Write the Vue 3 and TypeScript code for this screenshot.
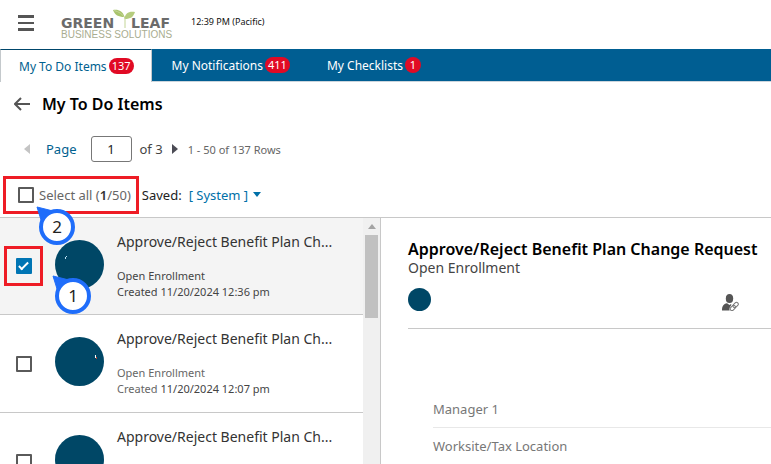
<script setup lang="ts">
import { ref } from 'vue'

interface Tab {
  label: string
  count: number
}

interface TodoItem {
  id: number
  title: string
  category: string
  created: string
  checked: boolean
}

const tabs: Tab[] = [
  { label: 'My To Do Items', count: 137 },
  { label: 'My Notifications', count: 411 },
  { label: 'My Checklists', count: 1 },
]
const activeTab = ref(0)
const page = ref('1')
const selectAll = ref(false)

const items = ref<TodoItem[]>([
  { id: 1, title: 'Approve/Reject Benefit Plan Ch...', category: 'Open Enrollment', created: '11/20/2024 12:36 pm', checked: true },
  { id: 2, title: 'Approve/Reject Benefit Plan Ch...', category: 'Open Enrollment', created: '11/20/2024 12:07 pm', checked: false },
  { id: 3, title: 'Approve/Reject Benefit Plan Ch...', category: '', created: '', checked: false },
])

const fields: string[] = ['Manager 1', 'Worksite/Tax Location']
</script>

<template>
  <div class="app">
    <header class="top">
      <button class="menu" type="button" aria-label="Menu">
        <svg width="16" height="16" viewBox="0 0 16 16">
          <path d="M0 0h16v3H0zM0 7h16v2H0zM0 13h16v3H0z" fill="#555" />
        </svg>
      </button>
      <div class="logo">
        <div class="logo-name">
          <span>GREEN</span>
          <svg class="leaf" width="22" height="20" viewBox="0 0 22 20">
            <path d="M0 1C5 0 10 2 11.500 8C5 8 2 6 0 1z" fill="#a9c46c" />
            <path d="M22 3C16 2 12 4 11.500 10C18 10 20 8 22 3z" fill="#b5cc7e" />
            <path d="M1 1.500Q8 3 12 9V19" fill="none" stroke="#c3d596" stroke-width="1" />
          </svg>
          <span>LEAF</span>
        </div>
        <div class="logo-sub">BUSINESS SOLUTIONS</div>
      </div>
      <span class="clock">12:39 PM (Pacific)</span>
    </header>

    <nav class="tabs">
      <button
        v-for="(tab, i) in tabs"
        :key="tab.label"
        type="button"
        class="tab"
        :class="{ active: i === activeTab }"
        @click="activeTab = i"
      >
        <span>{{ tab.label }}</span>
        <span class="badge">{{ tab.count }}</span>
      </button>
    </nav>

    <div class="heading">
      <button class="back" type="button" aria-label="Back">
        <svg width="16" height="14" viewBox="0 0 16 14">
          <path d="M7 1L1 7l6 6M1 7h15" fill="none" stroke="#555" stroke-width="2" />
        </svg>
      </button>
      <h1>My To Do Items</h1>
    </div>

    <div class="pager">
      <button class="arrow" type="button" aria-label="Previous page">
        <svg width="6" height="10" viewBox="0 0 6 10"><path d="M6 0v10L0 5z" fill="#c4c4c4" /></svg>
      </button>
      <label for="page">Page</label>
      <input id="page" v-model="page" class="page-box" type="text" />
      <span class="of">of 3</span>
      <button class="arrow next" type="button" aria-label="Next page">
        <svg width="6" height="10" viewBox="0 0 6 10"><path d="M0 0v10l6-5z" fill="#4c4c55" /></svg>
      </button>
      <span class="rows">1 - 50 of 137 Rows</span>
    </div>

    <div class="filters">
      <div class="select-all">
        <input id="select-all" v-model="selectAll" class="check" type="checkbox" />
        <label for="select-all">Select all (<b>1</b>/50)</label>
        <svg class="callout callout-all" width="40" height="40" viewBox="0 0 40 40">
          <path d="M0 1L16 5L5 17z" fill="#1f6dfa" stroke="#1f6dfa" stroke-linejoin="round" />
          <circle cx="20" cy="21" r="16" fill="#fff" stroke="#1f6dfa" stroke-width="4" />
          <text x="20" y="27" text-anchor="middle">2</text>
        </svg>
      </div>
      <span class="saved">Saved:</span>
      <button class="system" type="button">
        [ System ]
        <svg width="8" height="5" viewBox="0 0 8 5"><path d="M0 0h8L4 5z" fill="#0070a8" /></svg>
      </button>
    </div>

    <main class="body">
      <section class="list">
        <ul>
          <li v-for="item in items" :key="item.id" class="item" :class="{ selected: item.checked }">
            <div class="pick">
              <input v-model="item.checked" class="check" type="checkbox" :aria-label="item.title" />
              <svg v-if="item.id === 1" class="callout callout-item" width="40" height="40" viewBox="0 0 40 40">
                <path d="M0 1L16 5L5 17z" fill="#1f6dfa" stroke="#1f6dfa" stroke-linejoin="round" />
                <circle cx="20" cy="21" r="16" fill="#fff" stroke="#1f6dfa" stroke-width="4" />
                <text x="20" y="27" text-anchor="middle">1</text>
              </svg>
            </div>
            <svg class="avatar" width="49" height="49" viewBox="0 0 49 49">
              <circle cx="24.500" cy="24.500" r="24.500" fill="#004766" />
              <path v-if="item.id === 1" d="M10.500 19v-2M11 16.500h1" stroke="#bfe3f5" />
              <path v-if="item.id === 2" d="M40.500 18v3" stroke="#fff" />
              <path v-if="item.id === 2" d="M41.500 20v2" stroke="#b0493a" />
            </svg>
            <div class="info">
              <div class="title">{{ item.title }}</div>
              <div class="meta">{{ item.category }}</div>
              <div v-if="item.created" class="meta">Created <span class="date">{{ item.created }}</span></div>
              <div v-else class="meta"></div>
            </div>
          </li>
        </ul>
        <div class="scrollbar">
          <svg width="8" height="5" viewBox="0 0 8 5"><path d="M4 0l4 5H0z" fill="#a3a3a3" /></svg>
          <div class="thumb"></div>
        </div>
      </section>

      <section class="detail">
        <h2>Approve/Reject Benefit Plan Change Request</h2>
        <div class="kind">Open Enrollment</div>
        <div class="people">
          <span class="dot"></span>
          <button class="proxy" type="button" aria-label="Linked person">
            <svg width="17" height="17" viewBox="0 0 17 17">
              <ellipse cx="7.500" cy="4.500" rx="3.700" ry="4.500" fill="#555" />
              <path d="M0 16.500C0 12 1.500 10 5 9.300L7.500 11l1.500-1c.6.500.4 1-.3 2-1.200 1.500-1.700 3-1 4.500z" fill="#555" />
              <g fill="none" stroke="#777" stroke-width="1">
                <rect x="-3" y="-1.800" width="6" height="3.600" rx="1.800" transform="translate(13.600 11) rotate(-45)" />
                <rect x="-3" y="-1.800" width="6" height="3.600" rx="1.800" transform="translate(10.800 14) rotate(-45)" />
              </g>
            </svg>
          </button>
        </div>
        <div class="fields">
          <div v-for="field in fields" :key="field" class="field">{{ field }}</div>
        </div>
      </section>
    </main>
  </div>
</template>

<style>
body {
  background: #fff;
}
</style>

<style scoped>
.app {
  display: flex;
  flex-direction: column;
  height: 100vh;
  overflow: hidden;
  font-family: 'Noto Sans', sans-serif;
  font-size: 13px;
  color: #444;
}

button {
  display: flex;
  align-items: center;
  padding: 0;
  border: 0;
  background: none;
  font: inherit;
  color: inherit;
  cursor: pointer;
}

svg {
  display: block;
  flex: none;
}

.top {
  display: flex;
  flex: none;
  align-items: center;
  height: 49px;
  padding-left: 18px;
}

.menu {
  margin-bottom: 4px;
}

.logo {
  width: 109px;
  margin-left: 27px;
  white-space: nowrap;
}

.logo-name {
  display: flex;
  align-items: flex-end;
  justify-content: space-between;
  height: 21px;
  font: bold 14px/14px 'DejaVu Sans', sans-serif;
  color: #6b6b6b;
}

.leaf {
  margin: 0 -6px 1px -4px;
}

.logo-sub {
  font: 10px/10px 'Liberation Sans', sans-serif;
  color: #a9ad90;
}

.clock {
  margin: 0 0 7px 21px;
  font-size: 9px;
  color: #111;
}

.tabs {
  display: flex;
  flex: none;
  height: 32px;
  border-bottom: 1px solid #ccd5dc;
  background: #005e92;
}

.tab {
  gap: 2px;
  padding: 0 17px 0 20px;
  font-size: 12px;
  color: #fff;
}

.tab.active {
  height: 33px;
  padding-left: 18px;
  border: solid #c4c9cc;
  border-width: 0 1px;
  border-top: 1px solid #00466b;
  background: #fff;
  color: #00618f;
}

.badge {
  min-width: 10px;
  padding: 0 3px;
  border-radius: 8px;
  background: #e10a24;
  font-size: 11px;
  line-height: 16px;
  color: #fff;
}

.heading {
  display: flex;
  flex: none;
  align-items: center;
  gap: 12px;
  height: 44px;
  padding-left: 14px;
}

h1,
h2 {
  margin: 0;
  font-size: 16px;
  font-weight: 600;
  line-height: 20px;
  color: #000;
}

.pager {
  display: flex;
  flex: none;
  align-items: center;
  height: 46px;
  padding-left: 24px;
}

.pager label {
  margin: 0 14px 0 16px;
  color: #00618f;
}

.page-box {
  box-sizing: border-box;
  width: 41px;
  height: 26px;
  padding: 0;
  border: 1px solid #777;
  border-radius: 3px;
  font: inherit;
  color: #222;
  text-align: center;
}

.of {
  margin: 0 9px 0 8px;
}

.rows {
  margin-left: 10px;
  font-size: 11px;
  color: #666;
}

.filters {
  display: flex;
  flex: none;
  align-items: center;
  height: 45px;
  padding-left: 3px;
}

.select-all {
  position: relative;
  box-sizing: border-box;
  display: flex;
  align-items: center;
  gap: 5px;
  height: 38px;
  padding: 0 5px 0 12px;
  border: 3px solid #ee1c25;
  color: #666;
}

.select-all b {
  font-weight: 600;
  color: #333;
}

.check {
  appearance: none;
  box-sizing: border-box;
  display: flex;
  justify-content: center;
  flex: none;
  width: 16px;
  height: 16px;
  margin: 0;
  border: 2px solid #5a5a5a;
  border-radius: 1px;
  background: #fff;
}

.check:checked {
  border-color: #0075b4;
  background: #0075b4;
}

.check:checked::after {
  content: '';
  width: 3px;
  height: 8px;
  border: solid #fff;
  border-width: 0 2px 2px 0;
  transform: rotate(45deg);
}

.callout {
  position: absolute;
  z-index: 2;
  overflow: visible;
}

.callout text {
  font-size: 17px;
  fill: #222;
}

.callout-all {
  left: 31px;
  top: 27px;
}

.callout-item {
  left: 46px;
  top: 26px;
}

.saved {
  margin: 0 7px 0 3px;
  color: #222;
}

.system {
  gap: 5px;
  color: #0070a8;
}

.body {
  display: grid;
  grid-template-columns: minmax(0, 381fr) minmax(0, 390fr);
  flex: 1;
  min-height: 0;
  border-top: 1px solid #c8c8c8;
}

.list {
  display: flex;
  min-height: 0;
  border-right: 1px solid #c8c8c8;
  overflow: hidden;
}

ul {
  flex: 1;
  min-width: 0;
  margin: 0;
  padding: 0;
  list-style: none;
}

.item {
  box-sizing: border-box;
  display: flex;
  align-items: center;
  height: 98px;
  padding-left: 4px;
  border-bottom: 1px solid #c8c8c8;
}

.item:first-child {
  height: 97px;
}

.item.selected {
  background: #f4f4f4;
}

.pick {
  position: relative;
  box-sizing: border-box;
  display: flex;
  align-items: center;
  justify-content: center;
  width: 39px;
  height: 40px;
  border: 3px solid transparent;
}

.selected .pick {
  border-color: #ee1c25;
}

.avatar {
  margin: 0 13px 4px 12px;
}

.info {
  min-width: 0;
  padding-bottom: 1px;
  white-space: nowrap;
}

.title {
  margin-bottom: 16px;
  font-size: 14px;
  line-height: 20px;
  color: #333;
}

.meta {
  min-height: 16px;
  font-size: 11px;
  line-height: 16px;
  color: #666;
}

.date,
.selected .meta {
  color: #444;
}

.scrollbar {
  display: flex;
  flex-direction: column;
  align-items: center;
  gap: 6px;
  width: 17px;
  padding-top: 6px;
  background: #f0f0f0;
}

.thumb {
  width: 13px;
  height: 83px;
  background: #c1c1c1;
}

.detail {
  min-width: 0;
  padding: 21px 0 0 27px;
  white-space: nowrap;
}

.kind {
  font-size: 14px;
  line-height: 17px;
  color: #444;
}

.people {
  display: flex;
  align-items: center;
  justify-content: space-between;
  height: 52px;
  border-bottom: 1px solid #c8c8c8;
}

.dot {
  width: 23px;
  height: 23px;
  margin-bottom: 6px;
  border-radius: 50%;
  background: #004766;
}

.proxy {
  margin-right: 32px;
}

.fields {
  padding: 62px 0 0 25px;
}

.field {
  height: 36px;
  border-bottom: 1px solid #e8e8e8;
  font-size: 13px;
  line-height: 36px;
  color: #777;
}
</style>
